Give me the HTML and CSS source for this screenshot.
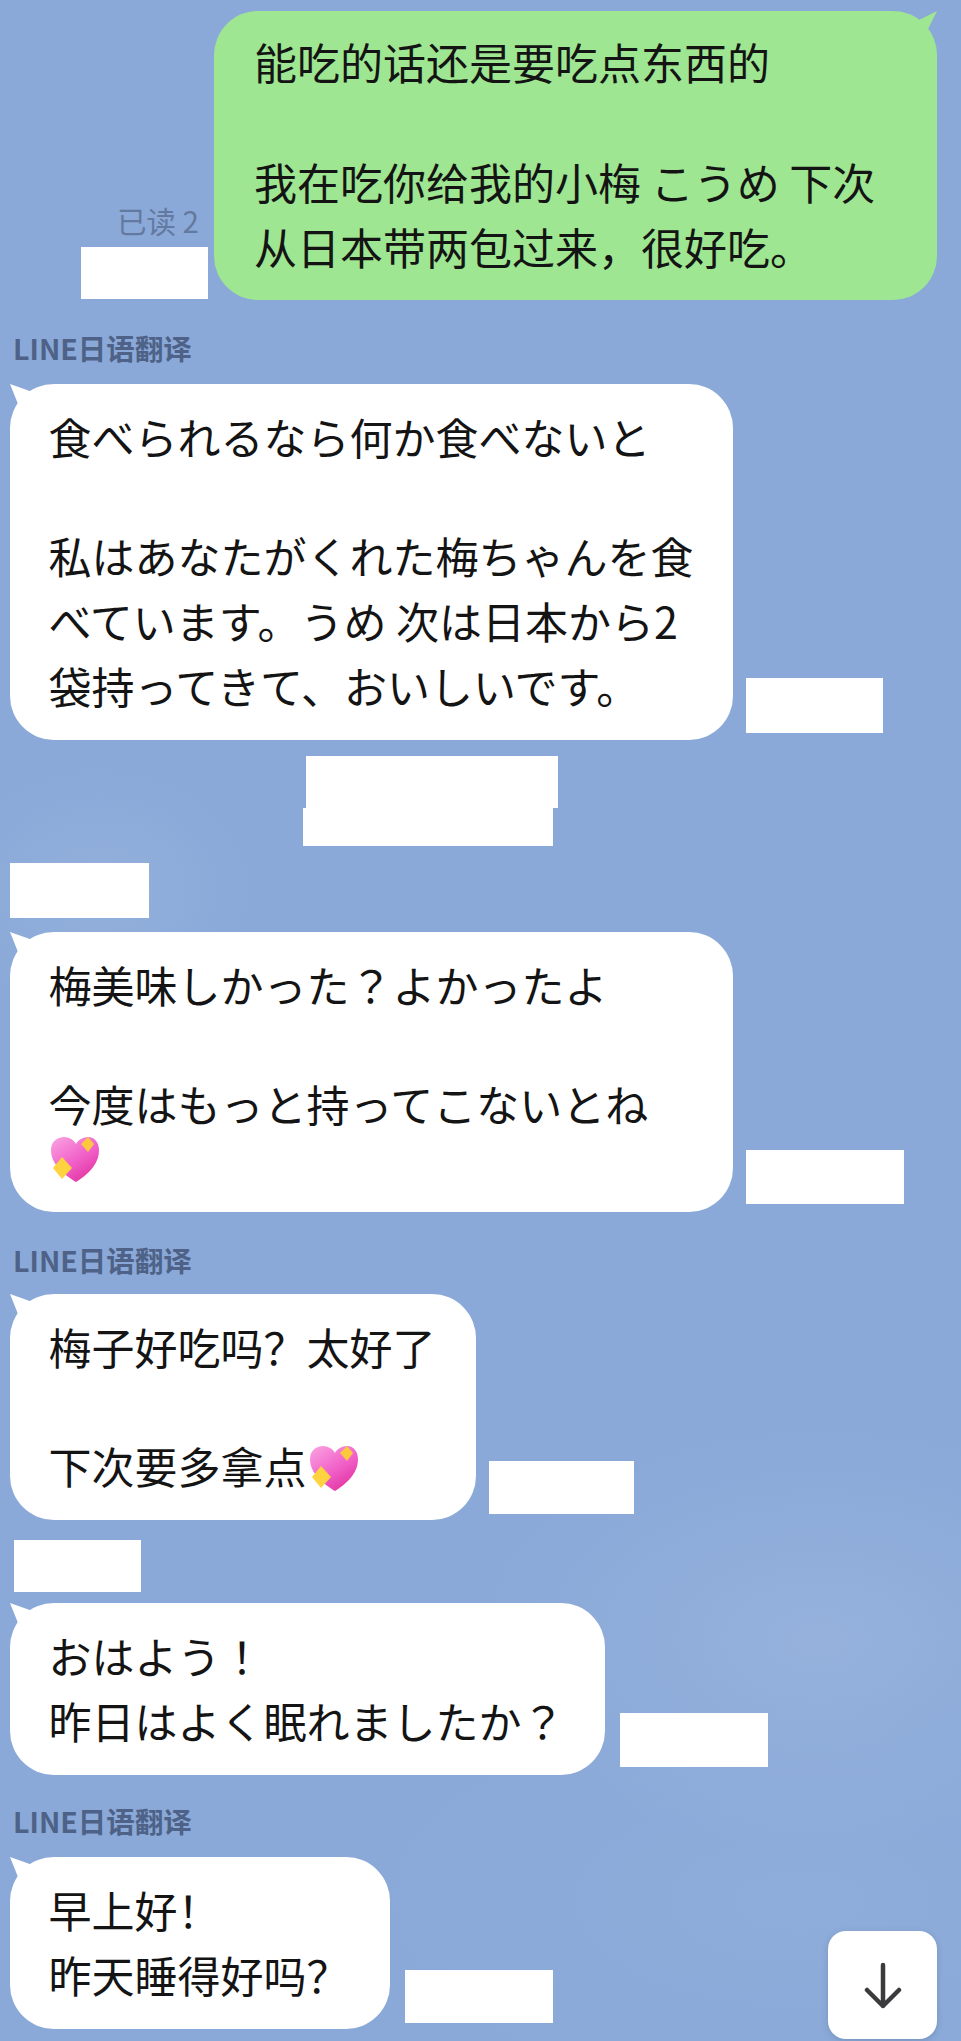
FILE: index.html
```html
<!DOCTYPE html>
<html lang="zh">
<head>
    <meta charset="UTF-8">
    <meta name="viewport" content="width=device-width, initial-scale=1.0">
    <title>LINE日语翻译</title>
    <link rel="stylesheet" href="styles.css">
</head>
<body>

    <svg class="defs" width="0" height="0">
        <defs>
            <linearGradient id="heartFill" x1="0.1" y1="0" x2="0.8" y2="1">
                <stop offset="0" stop-color="#fa9fe0"/>
                <stop offset="0.55" stop-color="#f060c8"/>
                <stop offset="1" stop-color="#e22f9e"/>
            </linearGradient>
            <symbol id="sparkHeart" viewBox="0 0 50 47">
                <path d="M26 46C15 39 1 29 1 14C1 6 7 1 14 1C19 1 24 4 26 8C28 4 33 1 38 1C45 1 49 7 49 14C49 29 37 39 26 46Z" fill="url(#heartFill)"/>
                <path d="M38 1L44 8L38 16L31 8Z" fill="#fcc83e"/>
                <path d="M12 21L22 32L12 43L3 32Z" fill="#ffd23f"/>
            </symbol>
        </defs>
    </svg>

    <div class="chat">

        <div class="row row-sent">
            <div class="read-meta">
                <span class="read-label">已读 2</span>
                <div class="mask mask-sent"></div>
            </div>
            <div class="bubble bubble-wide bubble-green zh">
                <p>能吃的话还是要吃点东西的</p>
                <p>我在吃你给我的小梅 こうめ 下次<br>从日本带两包过来，很好吃。</p>
            </div>
        </div>

        <div class="sender sender-first">LINE日语翻译</div>
        <div class="row">
            <div class="bubble bubble-wide ja" lang="ja">
                <p>食べられるなら何か食べないと</p>
                <p>私はあなたがくれた梅ちゃんを食<br>べています。うめ 次は日本から2<br>袋持ってきて、おいしいです。</p>
            </div>
            <div class="mask mask-time1"></div>
        </div>

        <div class="system-mask">
            <div class="mask mask-sys1"></div>
            <div class="mask mask-sys2"></div>
        </div>

        <div class="mask mask-name1"></div>
        <div class="row">
            <div class="bubble bubble-wide ja" lang="ja">
                <p>梅美味しかった？よかったよ</p>
                <p>今度はもっと持ってこないとね</p>
                <p class="emoji-line"><svg class="heart"><use href="#sparkHeart"/></svg></p>
            </div>
            <div class="mask mask-time2"></div>
        </div>

        <div class="sender sender-middle">LINE日语翻译</div>
        <div class="row">
            <div class="bubble zh">
                <p>梅子好吃吗？太好了</p>
                <p>下次要多拿点<svg class="heart heart-inline"><use href="#sparkHeart"/></svg></p>
            </div>
            <div class="mask mask-time3"></div>
        </div>

        <div class="mask mask-name2"></div>
        <div class="row">
            <div class="bubble ja" lang="ja">
                <p>おはよう！<br>昨日はよく眠れましたか？</p>
            </div>
            <div class="mask mask-time4"></div>
        </div>

        <div class="sender sender-last">LINE日语翻译</div>
        <div class="row">
            <div class="bubble zh">
                <p>早上好！<br>昨天睡得好吗？</p>
            </div>
            <div class="mask mask-time5"></div>
        </div>

        <button class="scroll-down" type="button" aria-label="scroll down">
            <svg width="40" height="48" viewBox="0 0 40 48">
                <path d="M20 4V45M4 29L20 45L36 29" fill="none" stroke="#3b3b3d" stroke-width="4.5" stroke-linecap="round" stroke-linejoin="round"/>
            </svg>
        </button>
    </div>

</body>
</html>
```
FILE: styles.css
```css
* {
    box-sizing: border-box;
}
body {
    margin: 0;
    background-color: #8aa9d8;
}
.defs {
    position: absolute;
}
.chat {
    position: relative;
    width: 961px;
    height: 2041px;
    overflow: hidden;
    padding: 11px 24px 0 10px;
    font-family: "Noto Sans CJK SC", "Liberation Sans", sans-serif;
    background-color: #8aa9d8;
    background-image:
        radial-gradient(ellipse 150px 120px at 100px 890px, rgba(160, 185, 225, 0.45), transparent),
        radial-gradient(ellipse 340px 210px at 820px 1640px, rgba(165, 188, 226, 0.42), transparent),
        radial-gradient(ellipse 420px 200px at 800px 1900px, rgba(165, 188, 226, 0.18), transparent);
}
.row {
    display: flex;
    align-items: flex-end;
    gap: 13px;
}
.row-sent {
    justify-content: flex-end;
    gap: 6px;
}
.read-meta {
    display: flex;
    flex-direction: column;
    align-items: flex-end;
}
.read-label {
    margin-right: 9px;
    margin-bottom: 9px;
    font-size: 29.5px;
    line-height: 36px;
    color: #64799f;
}
.bubble {
    position: relative;
    padding: 20px 40px 22px 38.5px;
    font-size: 43px;
    line-height: 65px;
    white-space: nowrap;
    color: #141414;
    background-color: #ffffff;
    border-radius: 44px;
}
.bubble::before {
    content: "";
    position: absolute;
    top: 0;
    left: 0;
    width: 24px;
    height: 24px;
    background-color: #ffffff;
    clip-path: polygon(0 0, 100% 35%, 40% 100%);
}
.bubble-wide {
    width: 723px;
}
.bubble-green {
    padding: 18px 40px 21px;
    background-color: #9ee691;
}
.bubble-green::before {
    left: auto;
    right: 0;
    background-color: #9ee691;
    clip-path: polygon(100% 0, 0 50%, 50% 100%);
}
.bubble p {
    margin: 0;
}
.bubble p + p {
    margin-top: 54px;
}
.bubble-green p + p {
    margin-top: 55px;
}
.bubble p.emoji-line {
    margin-top: 0;
    height: 54px;
}
.zh {
    font-family: "Noto Sans CJK SC", "Liberation Sans", sans-serif;
}
.ja {
    font-family: "Noto Sans CJK JP", "Liberation Sans", sans-serif;
}
.heart {
    display: block;
    width: 50px;
    height: 47px;
}
.emoji-line .heart {
    margin-left: 1px;
}
.heart-inline {
    display: inline-block;
    margin-left: 2px;
    vertical-align: -8px;
}
.sender {
    margin: 30px 0 18px 3px;
    font-size: 28.5px;
    line-height: 36px;
    font-weight: 700;
    color: #4e6287;
}
.sender-middle {
    margin-bottom: 16px;
}
.sender-last {
    margin-top: 28px;
}
.mask {
    flex: none;
    background-color: #ffffff;
}
.mask-sent {
    width: 127px;
    height: 52px;
    margin-bottom: 1px;
}
.mask-time1 {
    width: 137px;
    height: 55px;
    margin-bottom: 7px;
}
.mask-time2 {
    width: 158px;
    height: 54px;
    margin-bottom: 8px;
}
.mask-time3 {
    width: 145px;
    height: 53px;
    margin-bottom: 6px;
}
.mask-time4 {
    width: 148px;
    height: 54px;
    margin-bottom: 8px;
    margin-left: 2px;
}
.mask-time5 {
    width: 148px;
    height: 53px;
    margin-bottom: 6px;
    margin-left: 2px;
}
.system-mask {
    margin: 16px 0 0 293px;
}
.mask-sys1 {
    width: 252px;
    height: 52px;
    margin-left: 3px;
}
.mask-sys2 {
    width: 250px;
    height: 38px;
}
.mask-name1 {
    width: 139px;
    height: 55px;
    margin: 17px 0 14px;
}
.mask-name2 {
    width: 127px;
    height: 52px;
    margin: 20px 0 11px 4px;
}
.scroll-down {
    position: absolute;
    left: 828px;
    top: 1931px;
    display: flex;
    align-items: center;
    justify-content: center;
    width: 109px;
    height: 108px;
    padding: 0;
    border: none;
    border-radius: 18px;
    background-color: #ffffff;
    box-shadow: 0 2px 6px rgba(60, 80, 120, 0.25);
}
```
